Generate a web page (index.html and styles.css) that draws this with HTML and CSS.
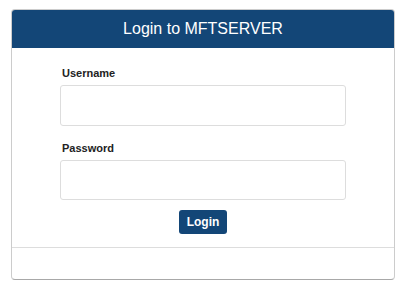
FILE: index.html
```html
<!DOCTYPE html>
<html lang="en">
<head>
    <meta charset="UTF-8">
    <meta name="viewport" content="width=device-width, initial-scale=1.0">
    <title>Login to MFTSERVER</title>
    <link rel="stylesheet" href="styles.css">
</head>
<body>

    <div class="panel">
        <div class="panel-heading">Login to MFTSERVER</div>
        <div class="panel-body">
            <label for="username">Username</label>
            <input type="text" id="username" />
            <label for="password">Password</label>
            <input type="password" id="password" />
            <div class="actions">
                <button type="button">Login</button>
            </div>
        </div>
        <div class="panel-footer"></div>
    </div>

</body>
</html>
```

FILE: styles.css
```css
body, html {
    margin: 0;
    padding: 0;
    background: #fff;
    font-family: 'Liberation Sans', Arial, sans-serif;
}
body {
    padding: 9px 14px 0 11px;
}
.panel {
    width: 382px;
    border: 1px solid #ccc;
    border-bottom-color: #a8a8a8;
    border-radius: 4px;
    overflow: hidden;
}
.panel-heading {
    background-color: #134677;
    color: #fff;
    font-size: 16px;
    text-align: center;
    height: 38px;
    line-height: 37px;
}
.panel-body {
    padding: 19px 48px 13px;
}
.panel-body label {
    display: block;
    font-size: 11px;
    font-weight: bold;
    color: #222;
    padding-left: 2px;
    line-height: 13px;
    margin-bottom: 5px;
}
.panel-body input {
    display: block;
    box-sizing: border-box;
    width: 286px;
    height: 41px;
    margin: 0 0 16px;
    border: 1px solid #ddd;
    border-radius: 3px;
    background: #fff;
}
.panel-body input#password {
    height: 40px;
    margin-bottom: 10px;
}
.actions {
    text-align: center;
}
.actions button {
    background-color: #134677;
    color: #fff;
    border: none;
    border-radius: 3px;
    font-family: inherit;
    font-size: 12px;
    font-weight: bold;
    width: 48px;
    height: 24px;
    padding: 0;
    cursor: pointer;
}
.panel-footer {
    border-top: 1px solid #ddd;
    height: 31px;
}
```
